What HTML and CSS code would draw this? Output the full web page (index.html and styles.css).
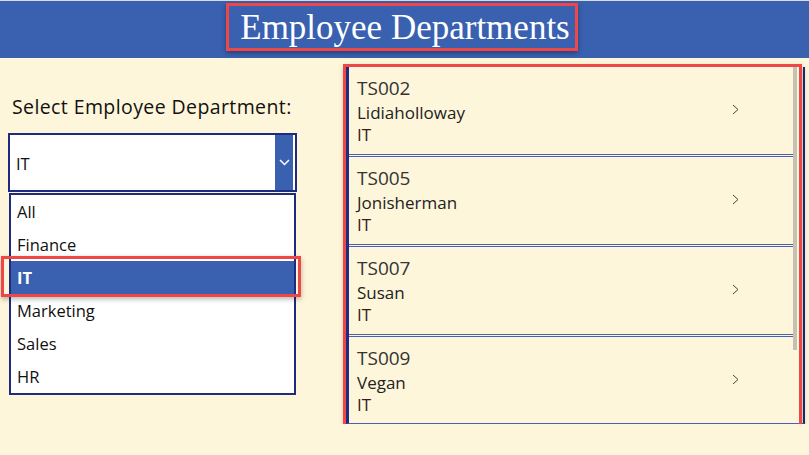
FILE: index.html
```html
<!DOCTYPE html>
<html>
<head>
    <meta charset="UTF-8">
    <title>Employee Departments</title>
    <link rel="stylesheet" href="styles.css">
</head>
<body>
    <div class="header">
        <div class="title-box">
            <h1>Employee Departments</h1>
        </div>
    </div>

    <div class="main">
        <div class="left">
            <label class="dd-label">Select Employee Department:</label>
            <div class="dd">
                <span class="dd-value">IT</span>
                <span class="dd-btn">
                    <svg width="11" height="7" viewBox="0 0 11 7"><path d="M1 1 L5.5 5.5 L10 1" fill="none" stroke="#fff" stroke-width="1.5"/></svg>
                </span>
            </div>
            <ul class="dd-list">
                <li>All</li>
                <li>Finance</li>
                <li class="selected">IT<span class="mark"></span></li>
                <li>Marketing</li>
                <li>Sales</li>
                <li>HR</li>
            </ul>
        </div>

        <div class="gallery-wrap">
            <div class="gallery">
                <div class="items">
                    <div class="item">
                        <div class="text">
                            <div class="id">TS002</div>
                            <div class="name">Lidiaholloway</div>
                            <div class="dept">IT</div>
                        </div>
                        <svg class="chev" width="7" height="11" viewBox="0 0 7 11"><path d="M1 1 L6 5.5 L1 10" fill="none" stroke="#444" stroke-width="1"/></svg>
                    </div>
                    <div class="item">
                        <div class="text">
                            <div class="id">TS005</div>
                            <div class="name">Jonisherman</div>
                            <div class="dept">IT</div>
                        </div>
                        <svg class="chev" width="7" height="11" viewBox="0 0 7 11"><path d="M1 1 L6 5.5 L1 10" fill="none" stroke="#444" stroke-width="1"/></svg>
                    </div>
                    <div class="item">
                        <div class="text">
                            <div class="id">TS007</div>
                            <div class="name">Susan</div>
                            <div class="dept">IT</div>
                        </div>
                        <svg class="chev" width="7" height="11" viewBox="0 0 7 11"><path d="M1 1 L6 5.5 L1 10" fill="none" stroke="#444" stroke-width="1"/></svg>
                    </div>
                    <div class="item">
                        <div class="text">
                            <div class="id">TS009</div>
                            <div class="name">Vegan</div>
                            <div class="dept">IT</div>
                        </div>
                        <svg class="chev" width="7" height="11" viewBox="0 0 7 11"><path d="M1 1 L6 5.5 L1 10" fill="none" stroke="#444" stroke-width="1"/></svg>
                    </div>
                </div>
                <div class="scroll"><div class="thumb"></div></div>
            </div>
            <div class="gallery-mark"></div>
        </div>
    </div>
</body>
</html>
```

FILE: styles.css
```css
body { margin: 0; background: #fef6da; font-family: "Open Sans", "Noto Sans", sans-serif; color: #222; }

.header { height: 57px; background: #3a60b0; border-top: 1px solid #d8dce6; display: flex; justify-content: center; align-items: flex-start; }
.title-box { margin-top: 2px; margin-left: -5px; width: 346px; height: 42px; border: 3px solid #ef4747; box-shadow: 0 2px 5px rgba(0,0,0,0.35); display: flex; align-items: center; justify-content: center; }
.title-box h1 { margin: 2px 0 0 6px; font-family: "Liberation Serif", serif; font-weight: normal; font-size: 35px; color: #fff; }

.main { display: flex; }
.left { width: 300px; padding-left: 8px; flex-shrink: 0; }

.dd-label { display: block; margin: 37px 0 14px 4px; font-size: 19.5px; line-height: 24px; font-weight: 500; letter-spacing: 0.4px; color: #111; }

.dd { width: 285px; height: 55px; border: 2px solid #1e2b7e; background: #fff; display: flex; align-items: stretch; }
.dd-value { flex: 1; padding-left: 6px; font-size: 16.5px; line-height: 57px; font-weight: 500; color: #111; }
.dd-btn { width: 18px; margin-right: 2px; background: #3a60b0; display: flex; align-items: center; justify-content: center; }

.dd-list { list-style: none; margin: 1px 0 0 1px; padding: 0; width: 283px; border: 2px solid #1e2b7e; background: #fff; }
.dd-list li { position: relative; height: 33px; line-height: 33px; padding-left: 6px; font-size: 16.5px; font-weight: 500; color: #111; }
.dd-list li.selected { background: #3a60b0; color: #fff; font-weight: 700; }
.mark { position: absolute; top: -5px; bottom: -3px; left: -10px; right: -7px; border: 3px solid #ef4747; box-shadow: 0 2px 5px rgba(0,0,0,0.3); }

.gallery-wrap { position: relative; margin-top: 9px; margin-left: 38px; }
.gallery { width: 454px; height: 356px; border-left: 3px solid #1e2b7e; border-right: 2px solid #1e2b7e; border-bottom: 1px solid #4a5fb5; display: flex; overflow: hidden; }
.items { width: 444px; }
.item { height: 87px; border-bottom: 3px double #4a5fb5; display: flex; align-items: center; }
.text { flex: 1; padding: 0 0 0 8px; margin-top: -2px; }
.id { font-size: 19px; line-height: 28px; color: #333; }
.name { font-size: 17px; line-height: 22px; color: #222; }
.dept { font-size: 17px; line-height: 21px; color: #3a1a1a; }
.chev { margin-right: 54px; margin-top: -3px; }

.scroll { width: 4px; }
.thumb { height: 283px; background: #c4c1b3; }

.gallery-mark { position: absolute; top: -3px; left: -3px; right: 3px; bottom: -3px; border: 3px solid #ef4747; box-shadow: 1px 3px 5px rgba(0,0,0,0.3); }
```
